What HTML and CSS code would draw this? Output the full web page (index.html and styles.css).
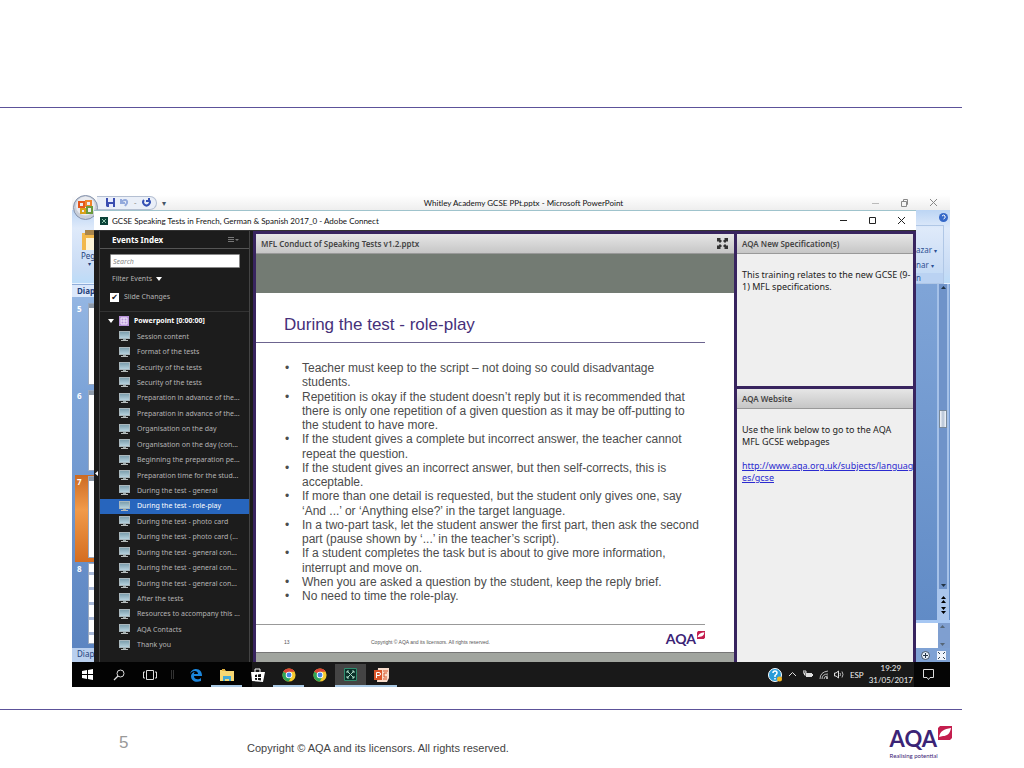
FILE: index.html
```html
<!DOCTYPE html>
<html lang="en">
<head>
<meta charset="utf-8">
<title>During the test - role-play</title>
<link rel="stylesheet" href="styles.css">
</head>
<body>
<svg class="defs" aria-hidden="true">
  <defs>
    <linearGradient id="screen" x1="0" y1="0" x2="0" y2="1"><stop offset="0" stop-color="#7d9fae"/><stop offset="1" stop-color="#b4d0dc"/></linearGradient>
    <symbol id="monitor" viewBox="0 0 11 11"><path d="M0 0h11v8H0z" fill="#a9b7bd"/><path d="M1 1h9v6H1z" fill="url(#screen)"/><path d="M4 8h3v1H4z" fill="#9aa"/><path d="M2 9h7v1H2z" fill="#b9bdbd"/></symbol>
    <symbol id="chrome" viewBox="0 0 16 16"><circle cx="8" cy="8" r="7.5" fill="#f5c92e"/><path d="M8 8 1.5 4.2A7.5 7.5 0 0 1 14.5 4.3H8z" fill="#dc4437"/><path d="M8 8 1.5 4.2A7.5 7.5 0 0 0 7.6 15.5L11 9.8z" fill="#2fa457"/><circle cx="8" cy="8" r="3.7" fill="#fff"/><circle cx="8" cy="8" r="2.8" fill="#4486e8"/></symbol>
    <symbol id="leaf" viewBox="0 0 14 14"><path d="M2 0h12v12l-2 2H0V2z" fill="#c41e4e"/><path d="M1 11C2 5 6 3 13 2c-1 6-4 8-8 8z" fill="#fff"/></symbol>
  </defs>
</svg>
<div class="slide">
  <header class="slide-head"></header>
  <main class="slide-main">
    <div class="desktop">
      <section class="ppt">
        <div class="ppt-title">
          <div class="qat">
            <svg width="9" height="9" viewBox="0 0 9 9"><path d="M0 0h9v9H1L0 8z" fill="#3a4db0"/><path d="M2 0h5v4H2zM3 6h4v3H3z" fill="#e8ecff"/></svg>
            <svg width="9" height="9" viewBox="0 0 9 9"><path d="M1 1v4h4M1 5c2-4 7-4 6 0L5 8" fill="none" stroke="#93a9dc" stroke-width="2"/></svg>
            <span class="dim">-</span>
            <svg width="9" height="9" viewBox="0 0 9 9"><path d="M2 2a3.3 3.3 0 1 0 5 0M7 0v3H4" fill="none" stroke="#3450b4" stroke-width="2"/></svg>
          </div>
          <span class="qat-more">▾</span>
          <h2>Whitley Academy GCSE PPt.pptx - Microsoft PowerPoint</h2>
          <div class="win-buttons">
            <button aria-label="Minimise"><svg width="9" height="9"><path d="M1 5.500h7" stroke="#bbb"/></svg></button>
            <button aria-label="Restore"><svg width="9" height="9"><path d="M1.500 3.500h5v5h-5zM3.500 3V1.500h4v5H7" fill="none" stroke="#888"/></svg></button>
            <button aria-label="Close"><svg width="9" height="9"><path d="m1 1 7 7M8 1 1 8" stroke="#888"/></svg></button>
          </div>
        </div>
        <div class="ppt-body">
          <div class="ppt-left">
            <div class="ribbon ribbon-left">
              <svg width="13" height="21" viewBox="0 0 13 21"><path d="M1 3h12v17H1z" fill="#f2b84b"/><path d="M4 0h9v5H4z" fill="#a9854b"/><path d="M5 8h8v12H5z" fill="#fff5d8"/></svg>
              <span>Peg</span><span class="tiny">▾</span>
            </div>
            <div class="tab">Diap</div>
            <div class="thumbs">
              <div class="thumb"><span>5</span><i></i></div>
              <div class="thumb"><span>6</span><i></i></div>
              <div class="thumb current"><span>7</span><i></i></div>
              <div class="thumb detail"><span>8</span><i></i></div>
            </div>
            <div class="status">Diap</div>
          </div>
          <div class="ppt-right">
            <div class="ribbon ribbon-right">
              <svg width="9" height="9" viewBox="0 0 9 9"><circle cx="4.500" cy="4.500" r="4.500" fill="#3568c8"/><path d="M3 3q2-2 3 0T4.500 6" stroke="#fff" fill="none"/></svg>
              <div class="group"><span>azar <small>▾</small></span><span>nar <small>▾</small></span><span class="group-name">n</span></div>
            </div>
            <div class="scroll">
              <svg width="5" height="7" viewBox="0 0 5 7"><path d="m0 5 2.500-3L5 5z" fill="#234"/></svg>
              <b></b>
              <svg width="5" height="7" viewBox="0 0 5 7"><path d="m0 2 2.500 3L5 2z" fill="#234"/></svg>
            </div>
            <div class="jump">
              <svg width="5" height="18" viewBox="0 0 5 18"><path d="m0 3 2.500-3L5 3zM0 7l2.500-3L5 7zM0 11l2.500 3L5 11zM0 15l2.500 3L5 15z" fill="#000"/></svg>
            </div>
            <div class="notes">
              <svg width="5" height="7" viewBox="0 0 5 7"><path d="m0 5 2.500-3L5 5z" fill="#567"/></svg>
              <svg width="5" height="7" viewBox="0 0 5 7"><path d="m0 2 2.500 3L5 2z" fill="#567"/></svg>
            </div>
            <div class="zoombar">
              <svg width="9" height="9" viewBox="0 0 9 9"><circle cx="4.500" cy="4.500" r="4" fill="#e8f0fa" stroke="#456"/><path d="M2 4.500h5M4.500 2v5" stroke="#234"/></svg>
              <svg width="9" height="9" viewBox="0 0 9 9"><path d="M0 0h9v9H0z" fill="#eef4fc"/><path d="m1 1 2 2m5-2L6 3M1 8l2-2m5 2L6 6" stroke="#345"/></svg>
            </div>
          </div>
        </div>
        <svg class="orb" width="25" height="25" viewBox="0 0 25 25"><circle cx="12.500" cy="12.500" r="12" fill="#c9ced8" stroke="#8492ac"/><circle cx="12.500" cy="11" r="9.500" fill="#e9ebf0"/><path d="M6 7h5v5H6z" fill="none" stroke="#e4571b" stroke-width="2"/><path d="M13 6h5v5h-5z" fill="none" stroke="#f0832b" stroke-width="2"/><path d="M8 14h4v4H8z" fill="none" stroke="#d9a017" stroke-width="2"/><path d="M14 12h5v6h-5z" fill="none" stroke="#6c9a3c" stroke-width="2"/></svg>
      </section>

      <section class="connect">
        <div class="connect-title">
          <svg width="8" height="8" viewBox="0 0 8 8"><path d="M0 0h8v8H0z" fill="#0b4238"/><path d="m2 2 4 4M6 2 2 6" stroke="#8fc7ad"/></svg>
          <h2>GCSE Speaking Tests in French, German &amp; Spanish 2017_0 - Adobe Connect</h2>
          <div class="win-buttons">
            <button aria-label="Minimise"><svg width="9" height="9"><path d="M1 4.500h7" stroke="#222"/></svg></button>
            <button aria-label="Maximise"><svg width="9" height="9"><path d="M1.500 1.500h6v6h-6z" fill="none" stroke="#222"/></svg></button>
            <button aria-label="Close"><svg width="9" height="9"><path d="m1 1 7 7M8 1 1 8" stroke="#222"/></svg></button>
          </div>
        </div>
        <div class="connect-body">
          <button class="collapse" aria-label="Collapse index"><svg width="3" height="5"><path d="M3 0v5L0 2.500z" fill="#fff"/></svg></button>
          <aside class="events">
            <div class="events-head"><h3>Events Index</h3><button class="menu" aria-label="Index menu"><svg width="11" height="7" viewBox="0 0 11 7"><path d="M0 1.500h6M0 3.500h6M0 5.500h6" stroke="#777"/><path d="M7 3h4L9 5z" fill="#777"/></svg></button></div>
            <div class="filters">
              <input class="search" type="text" placeholder="Search" aria-label="Search">
              <button class="filter">Filter Events <svg width="6" height="4"><path d="M0 0h6L3 4z" fill="#fff"/></svg></button>
              <label class="check"><input type="checkbox" checked><span>Slide Changes</span></label>
            </div>
            <div class="tree-head">
              <svg width="6" height="4"><path d="M0 0h6L3 4z" fill="#fff"/></svg>
              <svg width="10" height="10" viewBox="0 0 10 10"><path d="M0 0h10v10H0z" fill="#b692d8"/><path d="M2 2h6v6H2zM5 2v6M2 5h6" fill="none" stroke="#f4ecfb"/></svg>
              <h4>Powerpoint [0:00:00]</h4>
            </div>
            <ul class="tree">
              <li><svg><use href="#monitor"/></svg>Session content</li>
              <li><svg><use href="#monitor"/></svg>Format of the tests</li>
              <li><svg><use href="#monitor"/></svg>Security of the tests</li>
              <li><svg><use href="#monitor"/></svg>Security of the tests</li>
              <li><svg><use href="#monitor"/></svg>Preparation in advance of the...</li>
              <li><svg><use href="#monitor"/></svg>Preparation in advance of the...</li>
              <li><svg><use href="#monitor"/></svg>Organisation on the day</li>
              <li><svg><use href="#monitor"/></svg>Organisation on the day (con...</li>
              <li><svg><use href="#monitor"/></svg>Beginning the preparation pe...</li>
              <li><svg><use href="#monitor"/></svg>Preparation time for the stud...</li>
              <li><svg><use href="#monitor"/></svg>During the test - general</li>
              <li class="selected"><svg><use href="#monitor"/></svg>During the test - role-play</li>
              <li><svg><use href="#monitor"/></svg>During the test - photo card</li>
              <li><svg><use href="#monitor"/></svg>During the test - photo card (...</li>
              <li><svg><use href="#monitor"/></svg>During the test - general con...</li>
              <li><svg><use href="#monitor"/></svg>During the test - general con...</li>
              <li><svg><use href="#monitor"/></svg>During the test - general con...</li>
              <li><svg><use href="#monitor"/></svg>After the tests</li>
              <li><svg><use href="#monitor"/></svg>Resources to accompany this ...</li>
              <li><svg><use href="#monitor"/></svg>AQA Contacts</li>
              <li><svg><use href="#monitor"/></svg>Thank you</li>
            </ul>
          </aside>
          <div class="pods">
            <article class="pod share">
              <div class="pod-head"><h3>MFL Conduct of Speaking Tests v1.2.pptx</h3><button class="full" aria-label="Full screen"><svg width="11" height="11" viewBox="0 0 11 11"><path d="M0 0h4L3 1l2 2-2 2-2-2-1 1zM11 0v4l-1-1-2 2-2-2 2-2-1-1zM0 11V7l1 1 2-2 2 2-2 2 1 1zM11 11H7l1-1-2-2 2-2 2 2 1-1z" fill="#333"/></svg></button></div>
              <div class="stage">
                <div class="inner">
                  <h1>During the test - role-play</h1>
                  <ul class="points">
                    <li>Teacher must keep to the script – not doing so could disadvantage<br>students.</li>
                    <li>Repetition is okay if the student doesn’t reply but it is recommended that<br>there is only one repetition of a given question as it may be off-putting to<br>the student to have more.</li>
                    <li>If the student gives a complete but incorrect answer, the teacher cannot<br>repeat the question.</li>
                    <li>If the student gives an incorrect answer, but then self-corrects, this is<br>acceptable.</li>
                    <li>If more than one detail is requested, but the student only gives one, say<br>‘And ...’ or ‘Anything else?’ in the target language.</li>
                    <li>In a two-part task, let the student answer the first part, then ask the second<br>part (pause shown by ‘...’ in the teacher’s script).</li>
                    <li>If a student completes the task but is about to give more information,<br>interrupt and move on.</li>
                    <li>When you are asked a question by the student, keep the reply brief.</li>
                    <li>No need to time the role-play.</li>
                  </ul>
                  <div class="inner-foot">
                    <span class="inner-num">13</span>
                    <span class="inner-copy">Copyright © AQA and its licensors. All rights reserved.</span>
                    <span class="logo small">AQA<svg width="8" height="8"><use href="#leaf"/></svg></span>
                  </div>
                </div>
              </div>
            </article>
            <div class="side">
              <article class="pod spec">
                <div class="pod-head"><h3>AQA New Specification(s)</h3></div>
                <p>This training relates to the new GCSE (9-<br>1) MFL specifications.</p>
              </article>
              <article class="pod site">
                <div class="pod-head"><h3>AQA Website</h3></div>
                <p>Use the link below to go to the AQA<br>MFL GCSE webpages</p>
                <p><a href="http://www.aqa.org.uk/subjects/languages/gcse">http://www.aqa.org.uk/subjects/languag<br>es/gcse</a></p>
              </article>
            </div>
          </div>
        </div>
      </section>

      <nav class="taskbar">
        <button aria-label="Start"><svg width="11" height="11" viewBox="0 0 11 11"><path d="m0 2 5-1v4H0zM6 1l5-1v5H6zM0 6h5v4L0 9zM6 6h5v5l-5-1z" fill="#fff"/></svg></button>
        <button aria-label="Search"><svg width="12" height="12" viewBox="0 0 12 12"><circle cx="7.500" cy="4.500" r="3.500" fill="none" stroke="#ddd"/><path d="M5 7 1 11" stroke="#ddd" stroke-width="1.300"/></svg></button>
        <button aria-label="Task view"><svg width="14" height="10" viewBox="0 0 14 10"><path d="M3.500.5h7v9h-7zM2 2H.5v6H2M12 2h1.500v6H12" fill="none" stroke="#ddd"/></svg></button>
        <span class="divider"></span>
        <button aria-label="Edge"><svg width="14" height="14" viewBox="0 0 14 14"><path d="M1 6C2 2 5 1 7 1c4 0 6 3 6 7H5c0 4 5 4 7 2v3C7 15 2 13 2 8c0-2 2-4 4-4-1 1-1 1-1 2h4c0-4-6-4-8 0z" fill="#1b86dc"/></svg></button>
        <button class="open" aria-label="File Explorer"><svg width="14" height="12" viewBox="0 0 14 12"><path d="M0 1h5l1 1h8v10H0z" fill="#f6d873"/><path d="M2 0h3v2H2z" fill="#e3b23c"/><path d="M3 7h8v5H9v-2H5v2H3z" fill="#42a9d5"/></svg></button>
        <button aria-label="Store"><svg width="14" height="14" viewBox="0 0 14 14"><path d="M4 4V1h5v3" fill="none" stroke="#fff"/><path d="M0 4h14l-2 10-11-1z" fill="#fff"/><path d="m4 7 2-.5V9H4zm3-.6 3-.4v3H7zM4 10h2v2l-2-.3zm3 0h3v2.500L7 12z" fill="#111"/></svg></button>
        <button class="open" aria-label="Chrome"><svg width="14" height="14"><use href="#chrome"/></svg></button>
        <button aria-label="Chrome"><svg width="14" height="14"><use href="#chrome"/></svg></button>
        <button class="open active" aria-label="Adobe Connect"><svg width="13" height="13" viewBox="0 0 13 13"><path d="M.5.5h12v12H.5z" fill="#0a3029" stroke="#2f8d6e"/><path d="m3 3 7 7m0-7-7 7M3 5V3h2m3 0h2v2m0 3v2H8m-3 0H3V8" stroke="#a9d8c4" fill="none"/></svg></button>
        <button class="open" aria-label="PowerPoint"><svg width="15" height="14" viewBox="0 0 15 14"><path d="M4 0h11v10l-2 4H3z" fill="#f7dccb"/><path d="M0 2h8v10H0z" fill="#d9562a"/><path d="M2.500 10V4.500H5a1.500 1.500 0 0 1 0 3H3" fill="none" stroke="#fff"/><path d="M9 3h5M9 11h4M13 5h-3v4h3" fill="none" stroke="#d9562a"/></svg></button>
        <div class="tray">
          <svg width="14" height="14" viewBox="0 0 14 14"><circle cx="7" cy="7" r="6.500" fill="#2a9bd8" stroke="#fff"/><path d="M5 5q0-2 2-2t2 2q0 1-2 2.500V9m0 1v1.500" fill="none" stroke="#fff" stroke-width="1.500"/><circle cx="11.500" cy="11" r="2.500" fill="#f2b622"/></svg>
          <svg width="9" height="9" viewBox="0 0 9 9"><path d="m1 6 3.500-3.500L8 6" fill="none" stroke="#ddd"/></svg>
          <svg width="10" height="9" viewBox="0 0 10 9"><path d="M0 1h3v2H0zM1.500 3v2H3" fill="none" stroke="#ddd"/><path d="M3 3h6v4H3z" fill="#ddd"/><path d="M9 4h1v2H9z" fill="#ddd"/></svg>
          <svg width="9" height="9" viewBox="0 0 9 9"><path d="M1 9q0-7 8-8M3 9q0-5 6-5M5 9q0-3 4-3" fill="none" stroke="#bbb"/><circle cx="8" cy="8" r="1" fill="#ddd"/></svg>
          <svg width="10" height="9" viewBox="0 0 10 9"><path d="M.5 3H2l2.500-2v7L2 6H.500z" fill="none" stroke="#ddd"/><path d="M6 3q1 1.500 0 3M8 1.500q2 3 0 6" fill="none" stroke="#bbb"/></svg>
          <span>ESP</span>
        </div>
        <div class="clock">19:29<br>31/05/2017</div>
        <button class="notify" aria-label="Notifications"><svg width="11" height="11" viewBox="0 0 11 11"><path d="M.5.5h10v8H7l-1.500 2L4 8.500H.500z" fill="none" stroke="#ddd"/></svg></button>
      </nav>
    </div>
  </main>
  <footer class="slide-foot">
    <span class="num">5</span>
    <span class="copy">Copyright © AQA and its licensors. All rights reserved.</span>
    <div class="brand"><span class="logo">AQA<svg width="14" height="14"><use href="#leaf"/></svg></span><span class="tag">Realising potential</span></div>
  </footer>
</div>
</body>
</html>
```
FILE: styles.css
```css
* { box-sizing: border-box; }
body, h1, h2, h3, h4, p, ul { margin: 0; padding: 0; }
body { background: #fff; font-family: "Liberation Sans", Arial, sans-serif; }
ul { list-style: none; }
button { border: 0; padding: 0; background: none; font: inherit; color: inherit; display: flex; align-items: center; justify-content: center; }
svg { flex: none; display: block; }
.defs { position: absolute; width: 0; height: 0; }

.slide { display: flex; flex-direction: column; min-height: 100vh; }
.slide-head { height: 108px; margin-right: 62px; border-bottom: 1px solid #5c5299; }
.slide-main { padding: 87px 74px 22px 72px; }

.desktop { position: relative; font-family: "Noto Sans", "Open Sans", sans-serif; font-size: 8px; line-height: 12px; }

/* PowerPoint window */
.ppt { height: 467px; display: flex; flex-direction: column; }
.ppt-title { display: grid; grid-template-columns: 60px 1fr auto 1fr 60px; height: 15px; align-items: center; padding-left: 25px; background: linear-gradient(#fff, #eee); }
.ppt-title h2, .connect-title h2 { font: 400 8px/12px Lato, sans-serif; color: #111; white-space: nowrap; }
.ppt-title .win-buttons { grid-column: 4 / 6; padding-right: 12px; }
.qat { display: flex; gap: 5px; align-items: center; height: 14px; padding: 0 6px 0 9px; border: 1px solid #b4bfd2; border-left: 0; border-radius: 0 8px 8px 0; background: #eaeff8; }
.qat-more { padding-left: 5px; color: #456; }
.dim { color: #999; }
.win-buttons { display: flex; justify-content: flex-end; gap: 20px; margin-left: auto; }
.ppt-body { flex: 1; display: flex; justify-content: space-between; background: #6d95cc; }
.ppt-left { width: 24px; display: flex; flex-direction: column; color: #1f3f7c; overflow: hidden; white-space: nowrap; background: linear-gradient(#a9c6ec, #7da4d8 40%, #5a83c0); }
.ribbon { height: 74px; display: flex; flex-direction: column; background: linear-gradient(#bcd5f4, #dfeafa 25%, #c9dcf5 80%, #bcdcf8); border-bottom: 1px solid #e8f3ff; }
.ribbon-left { padding: 20px 0 0 9px; line-height: 10px; }
.tiny { font-size: 6px; line-height: 6px; padding-left: 7px; }
.tab { height: 13px; padding-left: 5px; background: #dbe8fb; font-weight: 700; border-top: 1px solid #8facd8; }
.thumbs { flex: 1; padding: 5px 0 0 3px; display: flex; flex-direction: column; }
.thumb { flex: 1; display: flex; gap: 6px; padding: 1px 0 4px 2px; color: #fff; font-weight: 700; }
.thumb i { flex: none; width: 9px; background: linear-gradient(#8d99a8 4px, #fff 4px); border: 1px solid #9aa9c0; }
.thumb.current { background: linear-gradient(#cc6a22, #f19a4a 40%, #d46d20); }
.thumb.detail i { background: repeating-linear-gradient(#fff 0 8px, #a9b9d8 8px 11px, #fff 11px 15px); }
.status { height: 14px; padding-left: 5px; background: #b9cfee; }

.ppt-right { width: 34px; display: flex; flex-direction: column; background: linear-gradient(#86aadb, #5d88c4); }
.ribbon-right { align-items: flex-end; padding: 3px 2px 0 0; color: #2c4f93; }
.ribbon-right .group { align-self: stretch; display: flex; flex-direction: column; margin: 3px 4px 0 0; padding-top: 17px; border: 1px solid #b0c7e6; border-left: 0; line-height: 14px; white-space: nowrap; }
.ribbon-right small { font-size: 6px; }
.ribbon-right .group-name { line-height: 10px; background: #bad2f2; }
.scroll { align-self: flex-end; width: 12px; margin-right: 1px; flex: 1; display: flex; flex-direction: column; justify-content: space-between; align-items: center; background: #6f93c9; border: solid #a5c1e8; border-width: 0 2px; }
.scroll b { width: 8px; height: 18px; margin-top: -36px; border: 1px solid #789; background: linear-gradient(90deg, #f4f7fb, #b4c2d4, #f4f7fb); }
.jump { height: 31px; width: 12px; margin-right: 1px; align-self: flex-end; display: flex; align-items: center; justify-content: center; background: #a9c5ec; }
.notes { height: 28px; border-top: 3px solid #a6c7f3; background: linear-gradient(90deg, #fff 22px, #7f9fd0 22px); display: flex; flex-direction: column; justify-content: space-between; align-items: flex-end; padding-right: 5px; }
.zoombar { height: 14px; display: flex; justify-content: flex-end; align-items: center; gap: 7px; padding-right: 4px; background: #7fa2d4; }
.orb { position: absolute; left: 1px; top: 0; }

/* Adobe Connect window */
.connect { position: absolute; inset: 15px 34px 25px 22px; display: flex; flex-direction: column; background: #fff; border-top: 1px solid #9fc3cc; }
.connect-title { height: 19px; display: flex; align-items: center; gap: 4px; padding: 0 10px 0 6px; }
.connect-body { flex: 1; min-height: 0; display: flex; background: #1c1c1c; border-top: 1px solid #333; }
.collapse { width: 6px; border-right: 1px solid #444; padding-top: 54px; }
.events { width: 150px; display: flex; flex-direction: column; color: #b4b4b4; border-right: 1px solid #444; font-size: 7px; }
.events-head { height: 18px; display: flex; justify-content: space-between; align-items: center; padding: 0 10px 0 12px; border-bottom: 1px solid #555; }
.events-head h3 { font-size: 8px; color: #fff; }
.filters { height: 62px; padding: 5px 9px 0 10px; display: flex; flex-direction: column; align-items: flex-start; }
.search { width: 100%; height: 14px; border: 1px solid #888; border-radius: 1px; padding: 0 2px; font: italic 7px "Noto Sans", sans-serif; }
.search::placeholder { color: #888; }
.filter { gap: 4px; height: 12px; margin: 5px 0 6px 2px; }
.check { display: flex; align-items: center; gap: 5px; height: 12px; }
.check input { appearance: none; width: 9px; height: 9px; margin: 0; background: #fff; display: grid; place-items: center; }
.check input:checked::before { content: "✔"; color: #111; font: 8px "DejaVu Sans", sans-serif; }
.tree-head { height: 18px; display: flex; align-items: center; gap: 5px; padding-left: 8px; border-top: 1px solid #333; }
.tree-head h4 { font-size: 7px; color: #fff; }
.tree { flex: 1; min-height: 0; display: grid; grid-auto-rows: 1fr; padding-bottom: 9px; }
.tree li { display: flex; align-items: center; gap: 7px; padding-left: 19px; white-space: nowrap; min-height: 0; }
.tree svg { width: 11px; height: 11px; }
.tree .selected { background: #2765bd; color: #fff; }
.pods { flex: 1; min-width: 0; display: grid; grid-template-columns: 478px minmax(0, 1fr); gap: 3px; margin-left: 3px; padding: 3px 3px 0; background: #38245f; }
.pod { background: #efefef; color: #333; display: flex; flex-direction: column; }
.pod-head { height: 20px; display: flex; align-items: center; justify-content: space-between; padding: 0 6px 0 5px; background: linear-gradient(#e6e6e6, #c6c6c6); border-bottom: 1px solid #999; }
.pod-head h3 { font-size: 8px; font-weight: 600; color: #444; white-space: nowrap; }
.stage { flex: 1; display: flex; flex-direction: column; padding: 39px 0 9px; background: linear-gradient(#737b73 50%, #a1a59f 50%); }
.inner { flex: 1; background: #fff; display: flex; flex-direction: column; font-family: "Liberation Sans", Arial, sans-serif; border-bottom: 1px solid #777; }
.inner h1 { margin-right: 29px; padding: 22px 0 7px 28px; height: 50px; font-size: 17px; line-height: 20px; font-weight: 400; color: #46307a; border-bottom: 1px solid #6c648f; }
.points { padding: 18px 0 0 46px; font-size: 12px; line-height: 1.19; color: #4c4c4c; white-space: nowrap; flex: 1; }
.points li { display: flex; }
.points li::before { content: "•"; width: 17px; margin-left: -17px; flex: none; }
.inner-foot { margin-right: 29px; height: 28px; display: flex; align-items: center; border-top: 1px solid #999; padding-left: 28px; font-size: 5px; color: #555; }
.inner-num { width: 87px; padding-top: 6px; }
.inner-copy { padding-top: 6px; }
.logo { display: flex; align-items: flex-start; gap: 1px; font-family: Lato, sans-serif; font-weight: 700; font-size: 22px; line-height: 26px; color: #3b2476; }
.logo.small { margin-left: auto; font-size: 14px; line-height: 16px; }
.side { display: grid; grid-template-rows: 152px 1fr; gap: 3px; }
.side p { padding: 15px 0 0 5px; font-size: 9px; line-height: 12px; color: #222; white-space: nowrap; }
.side p + p { padding-top: 12px; }
.side a { color: #2a2ad0; }

/* Taskbar */
.taskbar { height: 25px; display: flex; align-items: stretch; background: linear-gradient(90deg, #030303 180px, #191919 180px); color: #eee; font-family: Lato, sans-serif; }
.taskbar > button { width: 31px; border: solid transparent; border-width: 2px 0; }
.taskbar > .open { border-bottom-color: #a8c8e4; background-clip: padding-box; }
.taskbar > .active { background-color: #444; }
.divider { width: 3px; margin: 8px 6px; border: solid #333; border-width: 0 1px; }
.tray { margin-left: auto; display: flex; align-items: center; gap: 6px; padding-right: 5px; }
.clock { text-align: center; line-height: 12px; padding-right: 1px; }
.taskbar > .notify { width: 36px; background: #050505; padding-right: 7px; }

.slide-foot { flex: 1; margin-right: 62px; border-top: 1px solid #5c5299; display: flex; align-items: flex-start; padding: 16px 10px 0 119px; }
.num { width: 128px; padding-top: 8px; font-size: 17px; line-height: 18px; color: #999; }
.copy { padding-top: 15px; font-size: 11px; line-height: 14px; color: #444; }
.brand { margin-left: auto; }
.tag { display: block; font: 400 6px/7px Lato, sans-serif; color: #3b2476; }
```
